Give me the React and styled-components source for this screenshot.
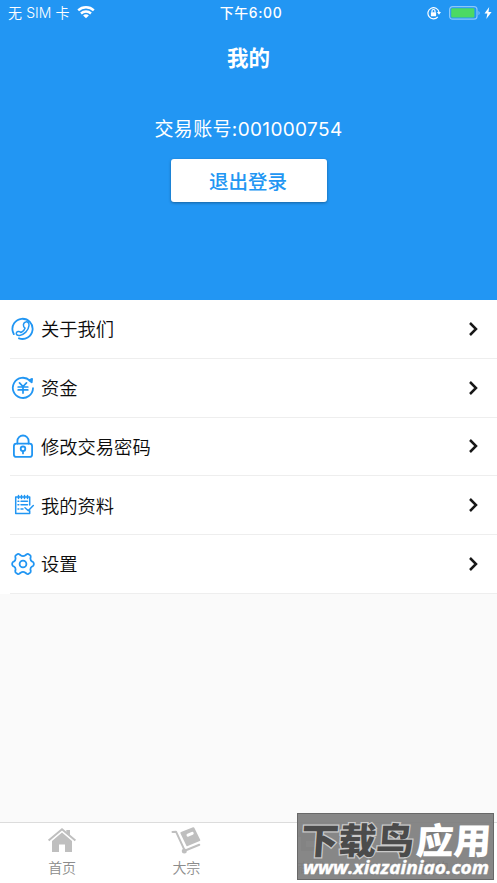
import React from 'react';
import styled, { createGlobalStyle } from 'styled-components';

const Global = createGlobalStyle`
  * { box-sizing: border-box; }
  body { margin: 0; background: #fafafa; font-family: Inter, "Noto Sans CJK SC", sans-serif; }
  svg { display: block; }
`;

const Screen = styled.main`
  position: relative;
  display: flex;
  flex-direction: column;
  width: 497px;
  height: 883px;
  overflow: hidden;
  background: #fafafa;
`;

const Header = styled.header`
  display: flex;
  flex-direction: column;
  align-items: center;
  height: 300px;
  background: #2296f3;
  color: #fff;
`;

const StatusBar = styled.div`
  display: grid;
  grid-template-columns: 1fr auto 1fr;
  align-items: center;
  width: 100%;
  height: 26px;
  padding: 0 5px 0 8px;
  line-height: 26px;
`;

const Carrier = styled.div`
  display: flex;
  align-items: center;
  gap: 7px;
  font-size: 14px;
  font-weight: 350;
  letter-spacing: 0.1px;
  white-space: nowrap;
`;

const Clock = styled.div`
  padding-left: 2px;
  font-size: 13.9px;
  font-weight: 500;
  letter-spacing: 0.65px;
`;

const Indicators = styled.div`
  display: flex;
  justify-content: flex-end;
  align-items: center;
  gap: 3px;
  margin-top: -1px;
`;

const Title = styled.h1`
  margin: 17px 0 0;
  font-size: 21.5px;
  line-height: 30px;
  font-weight: 700;
`;

const Account = styled.p`
  margin: 42px 0 0;
  font-size: 19px;
  font-weight: 400;
  line-height: 30px;
  letter-spacing: 0.35px;
`;

const LogoutButton = styled.button`
  width: 156px;
  height: 43px;
  margin-top: 14px;
  padding: 0 1px 1px 0;
  border: 0;
  border-radius: 3px;
  background: #fff;
  box-shadow: 0 1px 3px rgba(0, 0, 0, 0.35);
  color: #2296f3;
  font: 500 19.5px/41px "Noto Sans CJK SC", sans-serif;
`;

const Menu = styled.nav`
  height: 294px;
  padding-left: 10px;
  background: #fff;
`;

const MenuItem = styled.a`
  display: flex;
  align-items: center;
  height: 58.75px;
  padding: 0 17px 0 1px;
  border-bottom: 1px solid #eee;
  color: #0c0c0c;
  font-size: 18.3px;
  font-weight: 350;
`;

const ItemLabel = styled.span`
  flex: 1;
  margin-left: 6px;
  padding-bottom: 1px;
`;

const TabBar = styled.footer`
  display: grid;
  grid-template-columns: repeat(4, 1fr);
  height: 61px;
  margin-top: auto;
  border-top: 1px solid #dcdcdc;
  background: #fff;
`;

const Tab = styled.a`
  display: flex;
  flex-direction: column;
  align-items: center;
  padding-top: 2px;
  color: ${({ $active }) => ($active ? '#555' : '#8c8c8c')};
  font-size: 14px;
  font-weight: 350;
  line-height: 20px;
`;

const TabLabel = styled.span`
  margin-top: 3px;
`;

const Watermark = styled.aside`
  position: absolute;
  left: 297px;
  top: 813px;
  width: 197px;
  height: 67px;
  border: 1px solid #686868;
  background: rgba(126, 126, 126, 0.93);
`;

const WatermarkArt = styled.svg`
  width: 195px;
  height: 65px;
  overflow: visible;
`;

const line = { fill: 'none', stroke: '#2196f3', strokeWidth: 1.8, strokeLinecap: 'round', strokeLinejoin: 'round' };

const WifiIcon = () => (
  <svg width="18" height="14" viewBox="0 0 18 14" fill="none" stroke="#fff" strokeWidth="2.4">
    <path d="M1.200 4.300C5.500.2 12.500.2 16.800 4.300M4 7.500c2.800-2.600 7.200-2.600 10 0" />
    <path d="M6.100 9.400c1.600-1.400 4.200-1.400 5.800 0L9 12.200z" fill="#fff" stroke="none" />
  </svg>
);

const RotationIcon = () => (
  <svg width="14" height="14" viewBox="0 0 14 14" fill="none" stroke="#fff" strokeWidth="1.200">
    <path d="M10.800 10.900A5.600 5.600 0 1 1 12 6" />
    <path d="M9.900 6H14l-2 2.700z" fill="#fff" stroke="none" />
    <rect x="3.900" y="6.200" width="5.200" height="4" rx=".5" fill="#fff" stroke="none" />
    <path d="M5 6.500V5a1.500 1.500 0 0 1 3 0v1.500" />
  </svg>
);

const BatteryIcon = () => (
  <svg width="37" height="14" viewBox="-5 0 37 14">
    <rect x=".6" y=".6" width="27.400" height="12.600" rx="3" fill="none" stroke="#8bc8fa" strokeWidth="1.200" />
    <rect x="2.200" y="2.200" width="23.200" height="9.400" rx="1" fill="#4cd964" />
    <path d="M29.500 4.700q2.400 2.300 0 4.600z" fill="#8bc8fa" />
  </svg>
);

const BoltIcon = () => (
  <svg width="8" height="12" viewBox="0 0 8 12">
    <path d="M5.200 0 .5 6.500h2.900L2.300 12 7.600 5H4.500z" fill="#fff" />
  </svg>
);

const PhoneIcon = () => (
  <svg width="24" height="24" viewBox="0 0 24 24" {...line}>
    <path d="M1.900 14.900A10.100 10.100 0 1 1 8 21.300M1.900 14.900l.9 2.200" />
    <path d="M14 5.300c2.500-1.300 4.300.5 4 3.400-.6 4.900-4.800 9-9.400 9.700-2.200.3-3.900-1-3.200-2.600.6-1.300 2.700-1.900 3.900-.8l.8.5c2.100-1 3.300-2.300 3.900-4.300-1.200-1-1.700-2-1.600-3.300.1-1.100.7-2.200 1.600-2.600z" strokeWidth="1.500" />
  </svg>
);

const MoneyIcon = () => (
  <svg width="24" height="24" viewBox="0 0 24 24" {...line}>
    <path d="M22 12.200A10.100 10.100 0 1 1 18.900 4.600M18 4.300l3.100-1.400-.4 3.400z" />
    <path d="m8.500 6.900 3.500 3.600 3.500-3.600M7.200 11h9.600M7.200 13.900h9.600M12 10.700v6.400" strokeWidth="1.700" />
  </svg>
);

const LockIcon = () => (
  <svg width="24" height="24" viewBox="0 0 24 24" {...line}>
    <rect x="2.900" y="9.700" width="18.200" height="13.200" rx="2.500" />
    <path d="M6.400 9.500V7.100a5.600 5.600 0 0 1 11.200 0v2.400" />
    <circle cx="12" cy="14.800" r="2.300" />
    <path d="M12 17.300v2.100" />
  </svg>
);

const NotesIcon = () => (
  <svg width="24" height="24" viewBox="0 0 24 24" {...line} strokeWidth="1.5">
    <path d="M18.700 12V4H4.700v16.500h14v-2.700M7.500 2.600v3M10.500 2.600v3M13.500 2.600v3M16.500 2.600v3" />
    <path d="M7 8.300h.8M10 8.300h6.500M7 11.700h.8M10 11.700h6.500M7 16h.8M10 16h2M14 14.800l3.300 2.800 5-5.100" />
  </svg>
);

const GearIcon = () => (
  <svg width="24" height="24" viewBox="0 0 24 24" {...line}>
    <path d="M9.600 3.300 8.300 2.200a1.800 1.800 0 0 0-1.600-.1L4.900 3.200c-.6.4-.8 1-.6 1.700l.3 1.700c0 1.200-.6 2.200-1.600 2.800l-1.100.7c-.5.4-.7.800-.7 1.300v1.200c0 .5.200.9.700 1.300l1.100.7c1 .6 1.600 1.600 1.600 2.800l-.3 1.700c-.2.7 0 1.300.6 1.700l1.800 1.100c.5.300 1.100.2 1.600-.1l1.300-1.100c1.400-1 3.400-1 4.800 0l1.300 1.100c.5.300 1.100.4 1.600.1l1.800-1.100c.6-.4.8-1 .6-1.700l-.3-1.700c0-1.200.6-2.200 1.600-2.800l1.100-.7c.5-.4.7-.8.7-1.300v-1.200c0-.5-.2-.9-.7-1.300L21 9.400c-1-.6-1.600-1.600-1.600-2.800l.3-1.700c.2-.7 0-1.300-.6-1.700l-1.800-1.100a1.800 1.800 0 0 0-1.600.1l-1.300 1.100c-1.400 1-3.400 1-4.800 0z" />
    <circle cx="12" cy="12" r="3.400" />
  </svg>
);

const Chevron = () => (
  <svg width="12" height="16" viewBox="0 0 12 16" fill="none" stroke="#171717" strokeWidth="2.500">
    <path d="m2 2 6 6-6 6" />
  </svg>
);

const HomeIcon = () => (
  <svg width="30" height="30" viewBox="0 0 30 30" fill="#bfbfbf">
    <path d="M5 16 15 7.500l10 8.500v11h-7v-7.500h-6V27H5z" />
    <path d="M1.600 15.500 15 4.300l13.400 11.200" fill="none" stroke="#bfbfbf" strokeWidth="2" />
    <path d="M19.300 5H23v5.700l-3.700-3z" />
  </svg>
);

const TrolleyIcon = () => (
  <svg width="30" height="30" viewBox="0 0 30 30" fill="none" stroke="#bfbfbf" strokeWidth="2" strokeLinecap="round" strokeLinejoin="round">
    <path d="M1.500 6.900 5 6.700l8.300 18M15.500 25l12.800-5.200" />
    <circle cx="13.300" cy="26" r="2.500" fill="#bfbfbf" stroke="none" />
    <path d="m10.400 8 12-4.800 5.900 12-12 5z" fill="#bfbfbf" />
    <path d="m17 10.200 4.200-1.800" stroke="#fff" strokeWidth="3" />
  </svg>
);

const StoreIcon = () => (
  <svg width="30" height="30" viewBox="0 0 30 30" fill="#bfbfbf">
    <path d="M4 4h22l2 8h-3v14H5V12H2zM10 16v6h10v-6z" />
  </svg>
);

const PersonIcon = () => (
  <svg width="30" height="30" viewBox="0 0 30 30" fill="#666">
    <circle cx="15" cy="10" r="6.500" />
    <path d="M4 27c0-13 22-13 22 0z" />
  </svg>
);

const menu = [
  ['关于我们', PhoneIcon],
  ['资金', MoneyIcon],
  ['修改交易密码', LockIcon],
  ['我的资料', NotesIcon],
  ['设置', GearIcon],
];

const tabs = [
  ['首页', HomeIcon],
  ['大宗', TrolleyIcon],
  ['商城', StoreIcon],
  ['我的', PersonIcon],
];

export default function App() {
  return (
    <Screen>
      <Global />
      <Header>
        <StatusBar>
          <Carrier>无 SIM 卡 <WifiIcon /></Carrier>
          <Clock>下午6:00</Clock>
          <Indicators><RotationIcon /><BatteryIcon /><BoltIcon /></Indicators>
        </StatusBar>
        <Title>我的</Title>
        <Account>交易账号:001000754</Account>
        <LogoutButton>退出登录</LogoutButton>
      </Header>
      <Menu>
        {menu.map(([label, Icon]) => (
          <MenuItem key={label}>
            <Icon />
            <ItemLabel>{label}</ItemLabel>
            <Chevron />
          </MenuItem>
        ))}
      </Menu>
      <TabBar>
        {tabs.map(([label, Icon]) => (
          <Tab key={label} $active={label === '我的'}>
            <Icon />
            <TabLabel>{label}</TabLabel>
          </Tab>
        ))}
      </TabBar>
      <Watermark>
        <WatermarkArt viewBox="0 0 195 65">
          <g fontFamily="Noto Sans CJK SC" fontWeight="900" fontSize="36" transform="translate(2 0) skewX(-4)">
            <text x="3" y="40" textLength="113" lengthAdjust="spacingAndGlyphs" fill="#4b4b4b" stroke="#c9c9c9" strokeWidth="2.500" paintOrder="stroke">下载鸟</text>
            <text x="118" y="40" textLength="75" lengthAdjust="spacingAndGlyphs" fill="#fff">应用</text>
          </g>
          <text x="5" y="60" textLength="186" lengthAdjust="spacingAndGlyphs" fill="#fff" stroke="#fff" strokeWidth=".4" fontFamily="Open Sans" fontStyle="italic" fontWeight="700" fontSize="18">www.xiazainiao.com</text>
        </WatermarkArt>
      </Watermark>
    </Screen>
  );
}
